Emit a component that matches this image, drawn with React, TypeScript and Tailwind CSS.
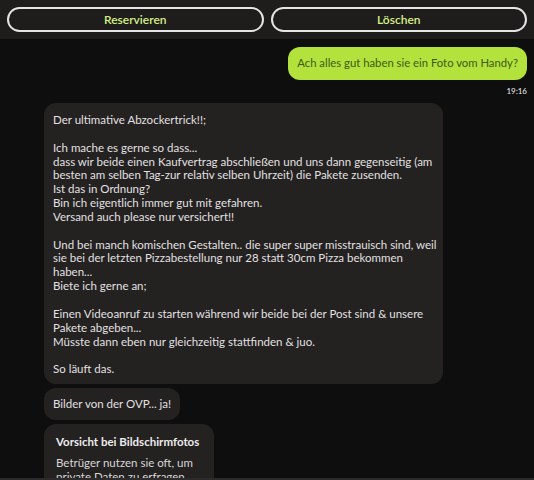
const font = { fontFamily: "Lato, 'Noto Sans', sans-serif" };

const longText = [
  "Der ultimative Abzockertrick!!;",
  "",
  "Ich mache es gerne so dass...",
  "dass wir beide einen Kaufvertrag abschließen und uns dann gegenseitig (am",
  "besten am selben Tag-zur relativ selben Uhrzeit) die Pakete zusenden.",
  "Ist das in Ordnung?",
  "Bin ich eigentlich immer gut mit gefahren.",
  "Versand auch please nur versichert!!",
  "",
  "Und bei manch komischen Gestalten.. die super super misstrauisch sind, weil",
  "sie bei der letzten Pizzabestellung nur 28 statt 30cm Pizza bekommen",
  "haben...",
  "Biete ich gerne an;",
  "",
  "Einen Videoanruf zu starten während wir beide bei der Post sind & unsere",
  "Pakete abgeben...",
  "Müsste dann eben nur gleichzeitig stattfinden & juo.",
  "",
  "So läuft das.",
];

export default function App() {
  return (
    <div className="w-[534px] h-[480px] flex flex-col overflow-hidden bg-[#0f0e0e]" style={font}>
      <div className="h-[39px] shrink-0 bg-[#1f1c1c] flex items-center gap-[7px] px-[7px]">
        <button className="flex-1 h-[25px] rounded-full border-2 border-[#e4e4e4] text-[12px] font-semibold text-[#d6ef86]">
          Reservieren
        </button>
        <button className="flex-1 h-[25px] rounded-full border-2 border-[#e4e4e4] text-[12px] font-semibold text-[#d6ef86]">
          Löschen
        </button>
      </div>

      <div className="flex-1 min-h-0 overflow-hidden flex flex-col pr-[7px] pl-[44px] pt-[8px]">
        <div className="shrink-0 self-end rounded-[12px] bg-[#b3e23c] text-[#3d5a12] text-[11.3px] px-[9px] h-[33px] flex items-center whitespace-nowrap">
          Ach alles gut haben sie ein Foto vom Handy?
        </div>
        <div className="shrink-0 self-end text-[8px] font-semibold text-[#d8d8d8] mt-[6px] leading-[10px]">19:16</div>

        <div className="shrink-0 mt-[7px] w-[399px] rounded-[12px] bg-[#242121] text-[#e2e0e0] text-[11.5px] leading-[13.85px] pt-[10px] pb-[8px] pl-[9px] pr-[6px] whitespace-nowrap">
          {longText.map((l, i) => (
            <div key={i} className="h-[13.85px]">{l}</div>
          ))}
        </div>

        <div className="shrink-0 mt-[4px] self-start rounded-[12px] bg-[#242121] text-[#e2e0e0] text-[11.5px] leading-[14px] px-[9px] h-[32px] flex items-center whitespace-nowrap">
          Bilder von der OVP... ja!
        </div>

        <div className="shrink-0 mt-[4px] w-[170px] rounded-t-[12px] bg-[#242121] px-[12px] pt-[11px] pb-[12px] whitespace-nowrap">
          <div className="text-[11.5px] font-bold text-[#ececec] leading-[14px]">Vorsicht bei Bildschirmfotos</div>
          <div className="mt-[7px] text-[11.5px] text-[#d8d6d6] leading-[14px]">
            <div>Betrüger nutzen sie oft, um</div>
            <div>private Daten zu erfragen.</div>
          </div>
        </div>
      </div>

      <div className="h-[2px] shrink-0 bg-[#2c2a2a]" />
    </div>
  );
}
